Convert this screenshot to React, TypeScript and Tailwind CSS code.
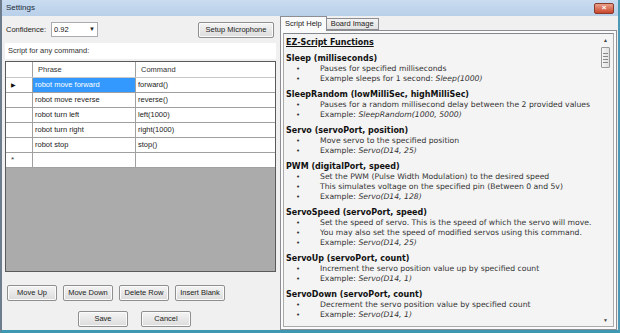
import React from "react";

const rows = [
  { phrase: "robot move forward", command: "forward()" },
  { phrase: "robot move reverse", command: "reverse()" },
  { phrase: "robot turn left", command: "left(1000)" },
  { phrase: "robot turn right", command: "right(1000)" },
  { phrase: "robot stop", command: "stop()" },
];

type Fn = { head: string; items: { text: string; ex?: string }[] };

const functions: Fn[] = [
  {
    head: "Sleep (milliseconds)",
    items: [
      { text: "Pauses for specified milliseconds" },
      { text: "Example sleeps for 1 second: ", ex: "Sleep(1000)" },
    ],
  },
  {
    head: "SleepRandom (lowMilliSec, highMilliSec)",
    items: [
      { text: "Pauses for a random millisecond delay between the 2 provided values" },
      { text: "Example: ", ex: "SleepRandom(1000, 5000)" },
    ],
  },
  {
    head: "Servo (servoPort, position)",
    items: [
      { text: "Move servo to the specified position" },
      { text: "Example: ", ex: "Servo(D14, 25)" },
    ],
  },
  {
    head: "PWM (digitalPort, speed)",
    items: [
      { text: "Set the PWM (Pulse Width Modulation) to the desired speed" },
      { text: "This simulates voltage on the specified pin (Between 0 and 5v)" },
      { text: "Example: ", ex: "Servo(D14, 128)" },
    ],
  },
  {
    head: "ServoSpeed (servoPort, speed)",
    items: [
      { text: "Set the speed of servo. This is the speed of which the servo will move." },
      { text: "You may also set the speed of modified servos using this command." },
      { text: "Example: ", ex: "Servo(D14, 25)" },
    ],
  },
  {
    head: "ServoUp (servoPort, count)",
    items: [
      { text: "Increment the servo position value up by specified count" },
      { text: "Example: ", ex: "Servo(D14, 1)" },
    ],
  },
  {
    head: "ServoDown (servoPort, count)",
    items: [
      { text: "Decrement the servo position value by specified count" },
      { text: "Example: ", ex: "Servo(D14, 1)" },
    ],
  },
  {
    head: "ServoRandom (servoPort, lowPosition, highPosition)",
    items: [{ text: "Move servo to a random position" }],
  },
];

function WinButton({ label, className = "" }: { label: string; className?: string }) {
  return (
    <div
      className={
        "flex items-center justify-center h-[16px] border border-[#8e8f8f] rounded-[2px] bg-gradient-to-b from-[#f4f4f4] to-[#dcdcdc] text-[7.5px] text-[#222] shadow-[inset_0_0_0_1px_#fbfbfb] " +
        className
      }
    >
      {label}
    </div>
  );
}

export default function App() {
  return (
    <div
      className="w-[620px] h-[333px] flex flex-col bg-[#f0f0f0] border-l-2 border-r-2 border-b-[3px] border-l-[#6d7d8d] border-r-[#4a9ab5] border-b-[#3f98b2] overflow-hidden"
      style={{ fontFamily: '"Liberation Sans", Arial, sans-serif' }}
    >
      {/* Title bar */}
      <div className="h-[16px] flex items-center justify-between bg-gradient-to-b from-[#c9dcf0] to-[#b9d0e9] pl-[4px] pr-[4px]">
        <span className="text-[8px] text-[#1b2a3a]">Settings</span>
        <div className="w-[20px] h-[11px] rounded-[2px] border border-[#8a3a2a] bg-gradient-to-b from-[#e8a08a] to-[#c8442a] flex items-center justify-center text-white text-[8px] font-bold leading-none">
          ×
        </div>
      </div>

      <div className="flex-1 flex min-h-0">
        {/* Left panel */}
        <div className="w-[276px] flex flex-col pl-[1px]">
          <div className="flex items-center h-[24px] pt-[3px] pl-[3px] pr-[4px]">
            <span className="text-[7.5px] text-[#222]">Confidence:</span>
            <div className="ml-[5px] w-[47px] h-[15px] bg-white border border-[#a9abb0] flex items-center justify-between px-[2px]">
              <span className="text-[7.5px] text-[#111]">0.92</span>
              <span className="text-[6px] text-[#222]">▼</span>
            </div>
            <WinButton label="Setup Microphone" className="ml-auto w-[76px] h-[15px]" />
          </div>
          <div className="mt-[3px] ml-[2px] mr-[2px] h-[16px] bg-white flex items-center pl-[3px]">
            <span className="text-[7.5px] text-[#333]">Script for any command:</span>
          </div>

          {/* Grid */}
          <div className="mt-[2px] ml-[2px] mr-[2px] h-[211px] border border-[#5a5a5a] bg-[#ababab] flex flex-col">
            <div className="grid grid-cols-[27px_103px_1fr] h-[16px] bg-white border-b border-[#c8c8c8]">
              <div className="border-r border-[#a0a0a0]" />
              <div className="border-r border-[#a0a0a0] text-[7.5px] text-[#333] flex items-center pl-[5px]">Phrase</div>
              <div className="text-[7.5px] text-[#333] flex items-center pl-[5px]">Command</div>
            </div>
            {rows.map((r, i) => (
              <div key={r.phrase} className="grid grid-cols-[27px_103px_1fr] h-[15px] bg-white border-b border-[#a0a0a0]">
                <div className="border-r border-[#a0a0a0] flex items-center pl-[5px] text-[6px] text-[#111]">
                  {i === 0 ? "▶" : ""}
                </div>
                <div
                  className={
                    "border-r border-[#a0a0a0] flex items-center pl-[2px] text-[7.5px] " +
                    (i === 0 ? "bg-[#3399ff] text-white" : "text-[#222]")
                  }
                >
                  {r.phrase}
                </div>
                <div className="flex items-center pl-[2px] text-[7.5px] text-[#222]">{r.command}</div>
              </div>
            ))}
            <div className="grid grid-cols-[27px_103px_1fr] h-[15px] bg-white border-b border-[#a0a0a0]">
              <div className="border-r border-[#a0a0a0] flex items-center pl-[5px] text-[8px] text-[#333]">*</div>
              <div className="border-r border-[#a0a0a0]" />
              <div />
            </div>
          </div>

          <div className="flex gap-[6px] mt-[13px] pl-[4px]">
            <WinButton label="Move Up" className="w-[50px]" />
            <WinButton label="Move Down" className="w-[50px]" />
            <WinButton label="Delete Row" className="w-[50px]" />
            <WinButton label="Insert Blank" className="w-[50px]" />
          </div>
          <div className="flex gap-[13px] mt-[10px] pl-[75px]">
            <WinButton label="Save" className="w-[50px] border-[#3c7fb1] shadow-[inset_0_0_0_1px_#48d0f0]" />
            <WinButton label="Cancel" className="w-[50px]" />
          </div>
        </div>

        {/* Right panel */}
        <div className="flex-1 flex flex-col pr-[1px] pl-[2px]">
          <div className="flex items-end h-[14px]">
            <div className="h-[15px] -mb-[1px] px-[4px] bg-[#fbfbfb] border border-b-0 border-[#8c8e94] text-[7.5px] text-[#222] flex items-center z-10">
              Script Help
            </div>
            <div className="h-[12px] px-[4px] bg-gradient-to-b from-[#f3f3f3] to-[#e3e3e3] border border-l-0 border-[#8c8e94] text-[7.5px] text-[#222] flex items-center">
              Board Image
            </div>
          </div>
          <div className="flex-1 border border-[#8c8e94] bg-[#fbfbfb] p-[2px] min-h-0">
            <div className="h-full border border-[#aaaaaa] border-t-[#828790] bg-[#f4f4f4] flex min-h-0">
              <div
                className="flex-1 overflow-hidden pl-[2px] pt-[3px] text-[#111]"
                style={{ fontFamily: '"DejaVu Sans", Verdana, sans-serif' }}
              >
                <div className="text-[8px] font-bold underline leading-[11px]">EZ-Script Functions</div>
                {functions.map((f) => (
                  <div key={f.head} className="mt-[5px]">
                    <div className="text-[8px] font-bold leading-[11px] whitespace-nowrap">{f.head}</div>
                    {f.items.map((it, j) => (
                      <div key={j} className="flex items-center h-[10px] text-[7.7px] text-[#333] whitespace-nowrap">
                        <span className="w-[34px] shrink-0 pl-[10px] text-[7px]">•</span>
                        <span>
                          {it.text}
                          {it.ex && <i>{it.ex}</i>}
                        </span>
                      </div>
                    ))}
                  </div>
                ))}
              </div>
              {/* Scrollbar */}
              <div className="w-[15px] flex flex-col items-center py-[2px] bg-[#f4f4f4]">
                <span className="text-[5px] text-[#444] leading-[8px]">▲</span>
                <div className="mt-[3px] w-[9px] h-[21px] border border-[#9a9a9a] rounded-[1px] bg-gradient-to-r from-[#f6f6f6] to-[#e0e0e0] flex flex-col items-center justify-center gap-[2px]">
                  <div className="w-[5px] h-px bg-[#888]" />
                  <div className="w-[5px] h-px bg-[#888]" />
                  <div className="w-[5px] h-px bg-[#888]" />
                  <div className="w-[5px] h-px bg-[#888]" />
                </div>
                <span className="mt-auto text-[5px] text-[#444] leading-[8px]">▼</span>
              </div>
            </div>
          </div>
        </div>
      </div>
    </div>
  );
}
